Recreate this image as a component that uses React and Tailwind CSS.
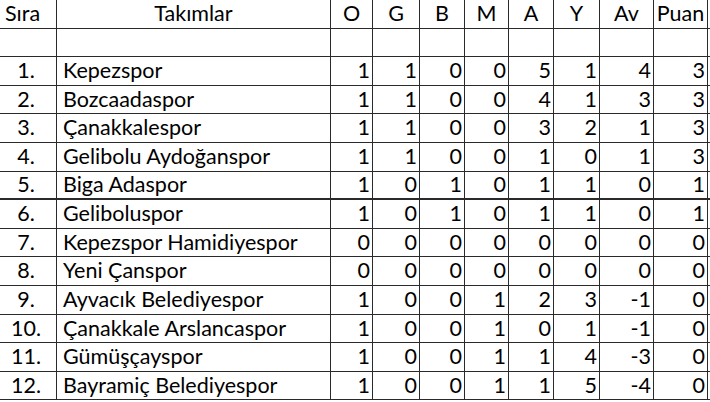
import React from "react";

const rows = [
  ["1.", "Kepezspor", 1, 1, 0, 0, 5, 1, 4, 3],
  ["2.", "Bozcaadaspor", 1, 1, 0, 0, 4, 1, 3, 3],
  ["3.", "Çanakkalespor", 1, 1, 0, 0, 3, 2, 1, 3],
  ["4.", "Gelibolu Aydoğanspor", 1, 1, 0, 0, 1, 0, 1, 3],
  ["5.", "Biga Adaspor", 1, 0, 1, 0, 1, 1, 0, 1],
  ["6.", "Geliboluspor", 1, 0, 1, 0, 1, 1, 0, 1],
  ["7.", "Kepezspor Hamidiyespor", 0, 0, 0, 0, 0, 0, 0, 0],
  ["8.", "Yeni Çanspor", 0, 0, 0, 0, 0, 0, 0, 0],
  ["9.", "Ayvacık Belediyespor", 1, 0, 0, 1, 2, 3, -1, 0],
  ["10.", "Çanakkale Arslancaspor", 1, 0, 0, 1, 0, 1, -1, 0],
  ["11.", "Gümüşçayspor", 1, 0, 0, 1, 1, 4, -3, 0],
  ["12.", "Bayramiç Belediyespor", 1, 0, 0, 1, 1, 5, -4, 0],
];

const heads = ["O", "G", "B", "M", "A", "Y", "Av", "Puan"];

const grid =
  "grid grid-cols-[57px_274px_42px_47px_45px_44px_45px_46px_54px_54px]";

const Row = ({ children, thick }) => (
  <div
    className={`${grid} h-[28.6px] ${
      thick ? "border-b-2" : "border-b"
    } border-[#2a2a2a]`}
  >
    {children}
  </div>
);

const Cell = ({ children, className = "" }) => (
  <div
    className={`flex items-center border-r border-[#2a2a2a] overflow-hidden whitespace-nowrap ${className}`}
  >
    {children}
  </div>
);

export default function App() {
  return (
    <div className="w-[710px] h-[402px] bg-white text-black font-['Lato','Liberation_Sans',sans-serif] text-[21.5px] leading-none">
      <Row>
        <Cell className="pl-[5px]">Sıra</Cell>
        <Cell className="justify-center">Takımlar</Cell>
        {heads.map((h) => (
          <Cell key={h} className="justify-center">
            {h}
          </Cell>
        ))}
      </Row>
      <Row>
        {Array.from({ length: 10 }).map((_, i) => (
          <Cell key={i} />
        ))}
      </Row>
      {rows.map((r, i) => (
        <Row key={r[0]} thick={i === 4}>
          <Cell className="justify-center pr-[4px]">{r[0]}</Cell>
          <Cell className="pl-[6px]">{r[1]}</Cell>
          {r.slice(2).map((v, j) => (
            <Cell key={j} className="justify-end pr-[2px]">
              {v}
            </Cell>
          ))}
        </Row>
      ))}
    </div>
  );
}
